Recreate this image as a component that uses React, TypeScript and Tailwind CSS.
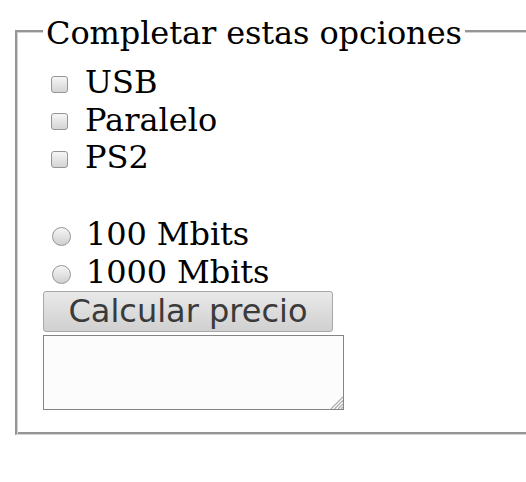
import React from "react";

function Check({ label }: { label: string }) {
  return (
    <label className="flex items-center h-[37.5px]">
      <input
        type="checkbox"
        className="appearance-none ml-[8px] mt-[3px] w-[17px] h-[17px] rounded-[3px] border border-[#959595] bg-linear-to-b from-[#f6f6f6] to-[#d4d4d4] shrink-0"
      />
      <span className="ml-[17px] leading-[37.5px]">{label}</span>
    </label>
  );
}

function Radio({ label }: { label: string }) {
  return (
    <label className="flex items-center h-[38px]">
      <input
        type="radio"
        name="vel"
        className="appearance-none ml-[9px] mt-[6px] w-[19px] h-[19px] rounded-full border border-[#959595] bg-linear-to-b from-[#f6f6f6] to-[#d0d0d0] shrink-0"
      />
      <span className="ml-[15px] leading-[38px] tracking-[-0.1px]">{label}</span>
    </label>
  );
}

export default function App() {
  return (
    <div className="w-[526px] h-[482px] overflow-hidden bg-white font-['DejaVu_Serif',serif] text-[32px] text-black">
      <fieldset className="ml-[15px] mt-[11px] w-[580px] min-w-0 border-t-2 border-l-2 border-b border-r border-t-[#959595] border-l-[#959595] border-b-[#d3d3d3] border-r-[#d3d3d3] shadow-[inset_1px_1px_0_#d3d3d3,inset_0_-2px_0_#959595] pl-[26px] pr-0 pt-[13px] pb-[24px]">
        <legend className="bg-white px-[3px] pt-[4px] leading-[36px] tracking-[-0.1px]">
          Completar estas opciones
        </legend>
        <Check label="USB" />
        <Check label="Paralelo" />
        <Check label="PS2" />
        <div className="h-[38px]" />
        <Radio label="100 Mbits" />
        <Radio label="1000 Mbits" />
        <button
          type="button"
          className="w-[290px] h-[41px] flex items-center justify-center rounded-[3px] border border-[#a8a8a8] bg-linear-to-b from-[#e9e9e9] to-[#d0d0d0] font-['DejaVu_Sans',sans-serif] text-[32px] leading-[37px] text-[#3a3a3a]"
        >
          Calcular precio
        </button>
        <div className="relative mt-[3px] w-[301px] h-[75px]">
          <textarea className="block w-full h-full resize-none border border-[#858585] bg-[#fcfcfc] outline-none" />
          <svg
            className="absolute right-[1px] bottom-[1px] w-[14px] h-[14px] pointer-events-none"
            viewBox="0 0 14 14"
          >
            <g stroke="#aaaaaa" strokeWidth="1.2">
              <line x1="14" y1="2" x2="2" y2="14" />
              <line x1="14" y1="5.5" x2="5.5" y2="14" />
              <line x1="14" y1="9" x2="9" y2="14" />
              <line x1="14" y1="12" x2="12" y2="14" />
            </g>
          </svg>
        </div>
      </fieldset>
    </div>
  );
}
